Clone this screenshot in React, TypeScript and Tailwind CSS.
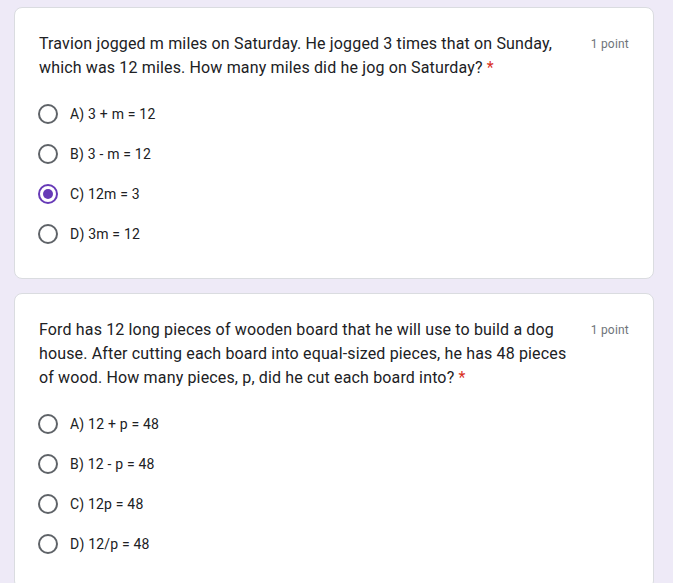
type Question = {
  title: string;
  options: string[];
  selected?: number;
};

const questions: Question[] = [
  {
    title:
      "Travion jogged m miles on Saturday. He jogged 3 times that on Sunday, which was 12 miles. How many miles did he jog on Saturday?",
    options: ["A) 3 + m = 12", "B) 3 - m = 12", "C) 12m = 3", "D) 3m = 12"],
    selected: 2,
  },
  {
    title:
      "Ford has 12 long pieces of wooden board that he will use to build a dog house. After cutting each board into equal-sized pieces, he has 48 pieces of wood. How many pieces, p, did he cut each board into?",
    options: ["A) 12 + p = 48", "B) 12 - p = 48", "C) 12p = 48", "D) 12/p = 48"],
  },
];

const Radio = ({ checked }: { checked: boolean }) => (
  <div
    className={`-ml-px flex h-5 w-5 shrink-0 items-center justify-center rounded-full border-2 ${
      checked ? "border-[#673ab7]" : "border-[#5f6368]"
    }`}
  >
    {checked && <div className="h-[10px] w-[10px] rounded-full bg-[#673ab7]" />}
  </div>
);

const QuestionCard = ({ q }: { q: Question }) => (
  <div className="ml-[14px] w-[640px] rounded-lg border border-[#dadce0] bg-white px-6 pt-6 pb-6">
    <div className="flex items-start">
      <div className="flex-1 text-[16px] leading-6 tracking-[0.15px] text-[#202124]">
        {q.title}
        <span className="text-[#d93025]"> *</span>
      </div>
      <div className="pl-4 text-[12px] leading-6 tracking-[0.2px] text-[#70757a]">1 point</div>
    </div>
    <div className="mt-[14px] flex flex-col">
      {q.options.map((o, i) => (
        <div key={o} className="flex h-10 items-center gap-3">
          <Radio checked={q.selected === i} />
          <span className="text-[14px] tracking-[0.2px] text-[#202124]">{o}</span>
        </div>
      ))}
    </div>
  </div>
);

export default function App() {
  return (
    <div
      className="flex min-h-screen flex-col gap-[14px] bg-[#eeeaf7] pt-[7px]"
      style={{ fontFamily: "Roboto, 'Liberation Sans', sans-serif" }}
    >
      {questions.map((q) => (
        <QuestionCard key={q.title} q={q} />
      ))}
    </div>
  );
}
